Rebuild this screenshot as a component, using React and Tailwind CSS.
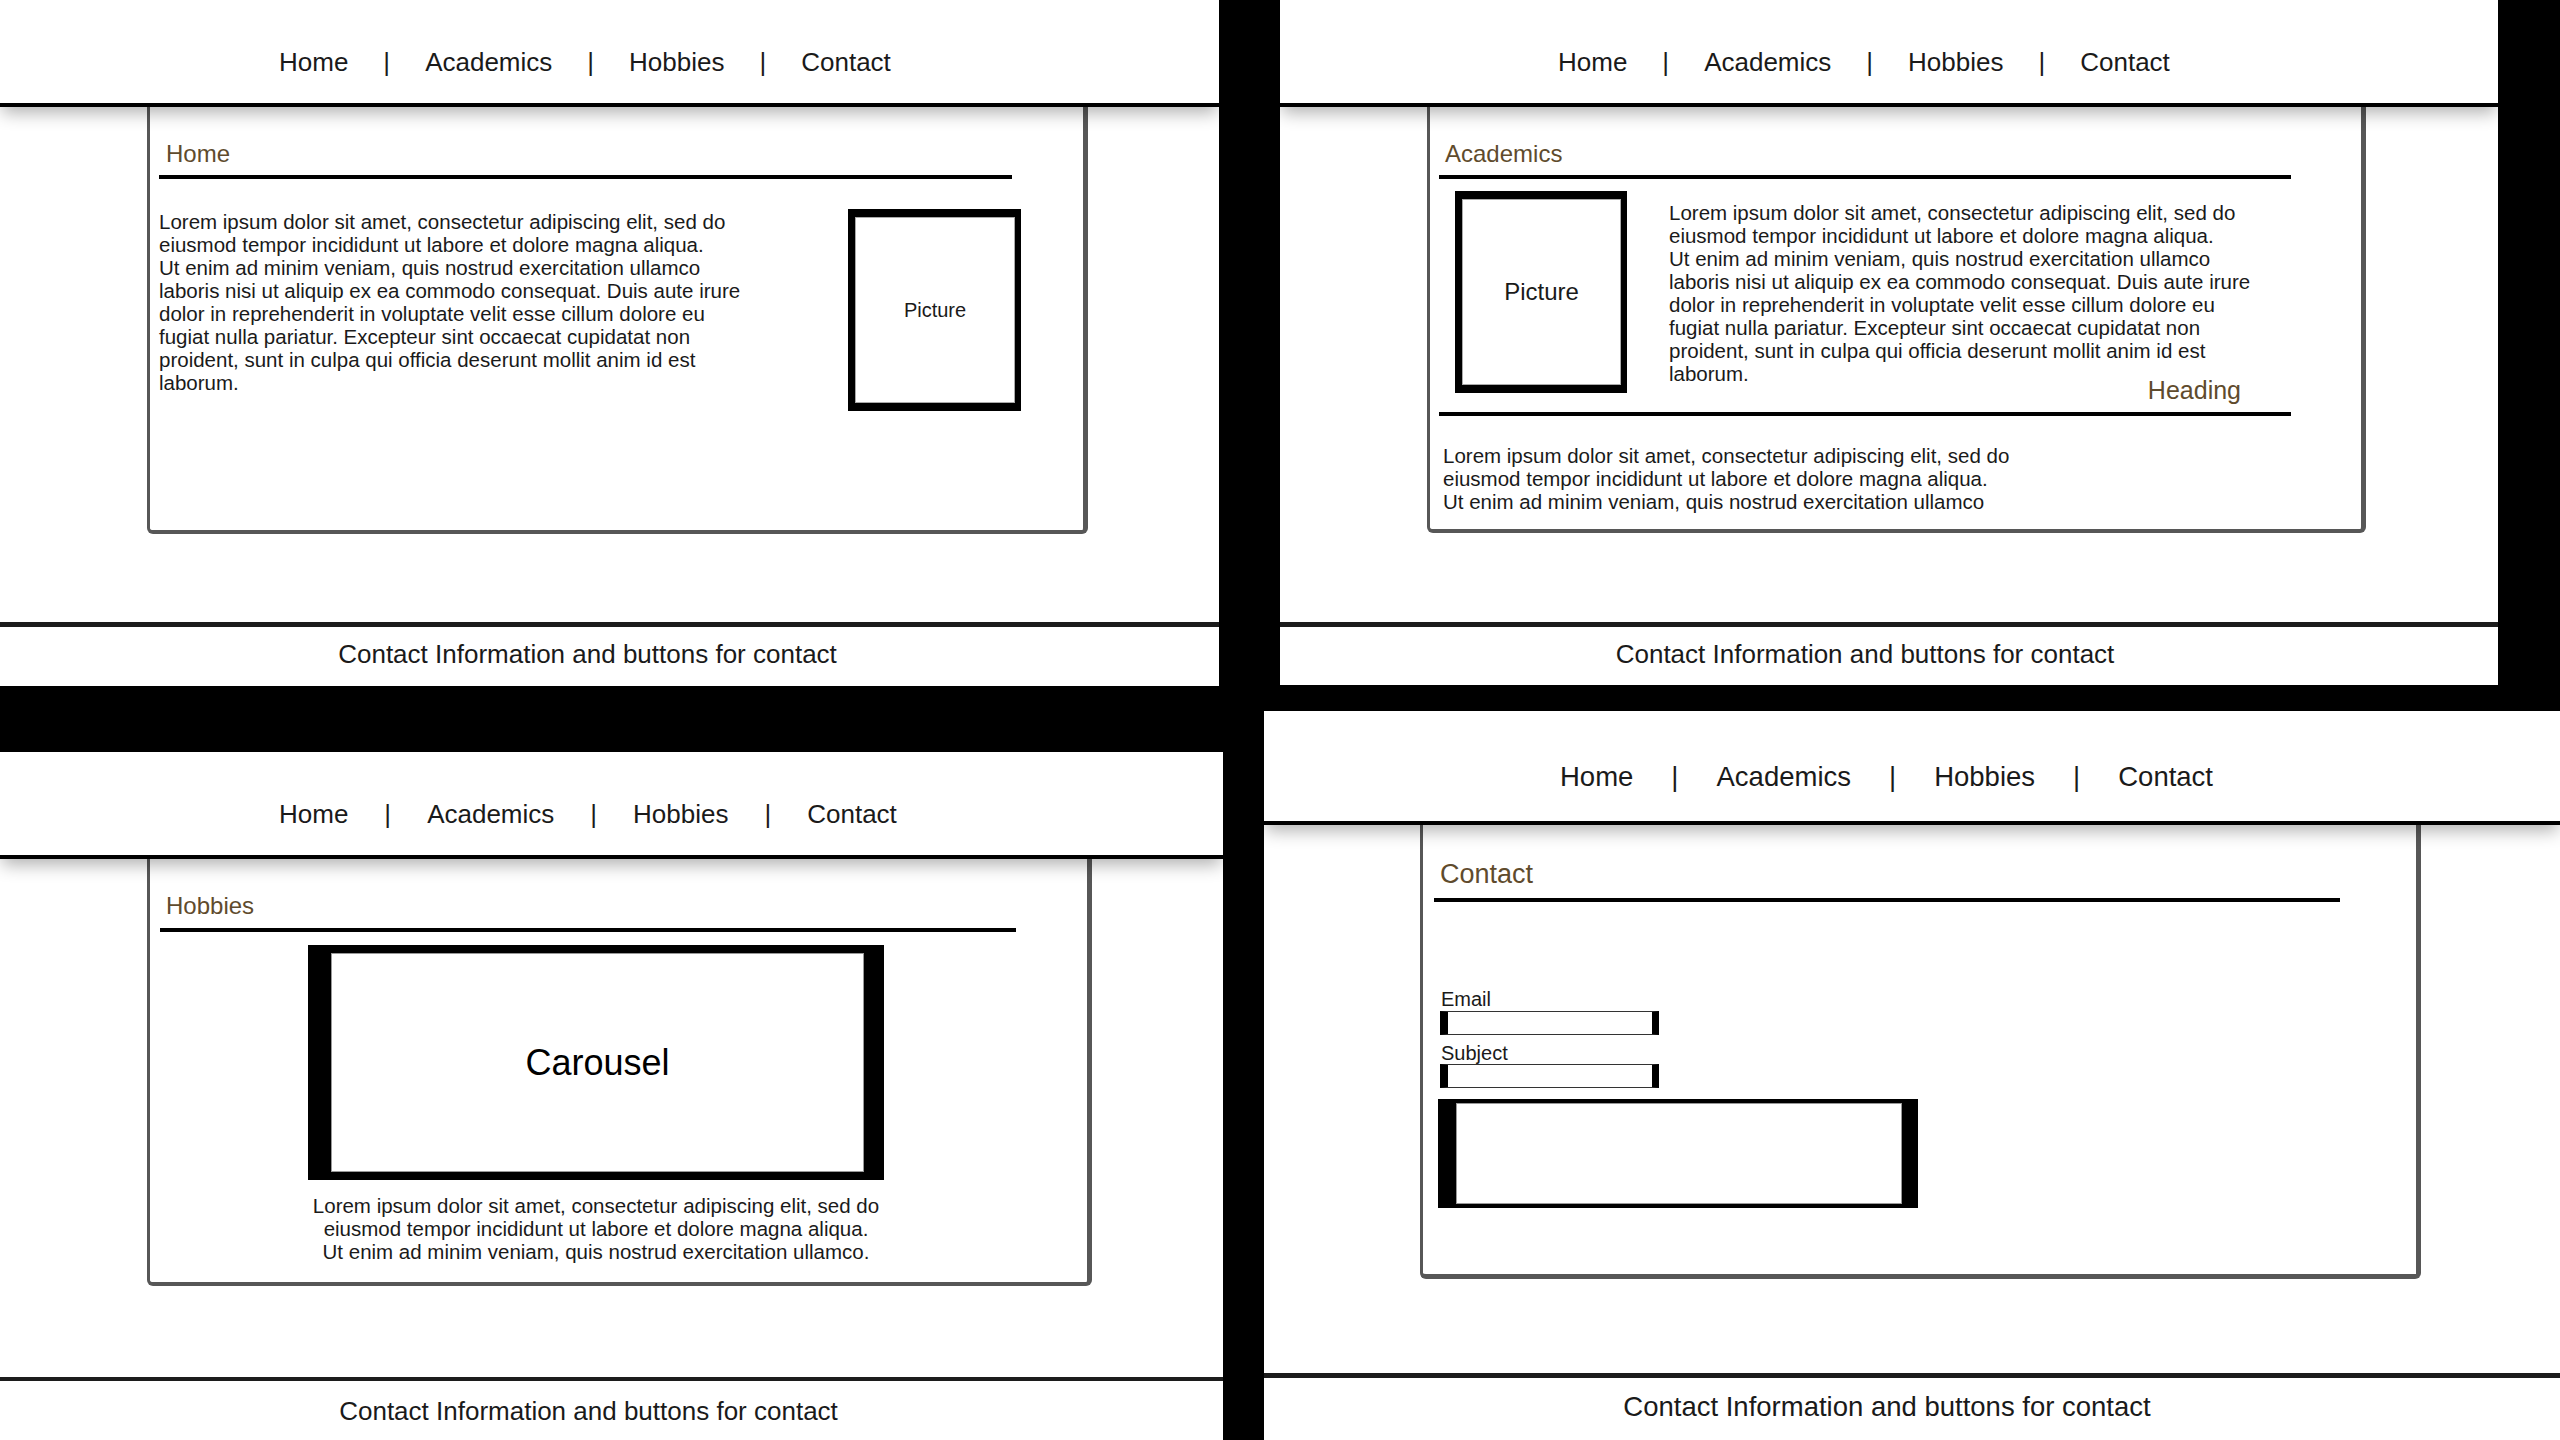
const lorem = [
  "Lorem ipsum dolor sit amet, consectetur adipiscing elit, sed do",
  "eiusmod tempor incididunt ut labore et dolore magna aliqua.",
  "Ut enim ad minim veniam, quis nostrud exercitation ullamco",
  "laboris nisi ut aliquip ex ea commodo consequat. Duis aute irure",
  "dolor in reprehenderit in voluptate velit esse cillum dolore eu",
  "fugiat nulla pariatur. Excepteur sint occaecat cupidatat non",
  "proident, sunt in culpa qui officia deserunt mollit anim id est",
  "laborum.",
];

const Lines = ({ lines }) =>
  lines.map((l, i) => (
    <div key={i} className="whitespace-nowrap">
      {l}
    </div>
  ));

const Nav = ({ className }) => {
  const items = ["Home", "Academics", "Hobbies", "Contact"];
  return (
    <nav className={"flex items-center text-[#1a1a1a] " + className}>
      {items.map((t, i) => (
        <span key={t} className="contents">
          {i > 0 && <span>|</span>}
          <span>{t}</span>
        </span>
      ))}
    </nav>
  );
};

const Header = () => (
  <header className="relative z-10 h-[107px] shrink-0 bg-white border-b-4 border-black pt-[21px] flex items-center shadow-[0_8px_16px_-2px_rgba(0,0,0,0.3)]">
    <Nav className="gap-[35px] text-[26px] leading-[30px] pl-[279px]" />
  </header>
);

// home page
const HomePanel = () => (
  <section className="bg-white flex flex-col w-[1219px] h-[686px]">
    <Header />
    <main className="flex-1">
      <div className="ml-[147px] w-[941px] h-[427px] border-l-[3px] border-r-[5px] border-b-[4px] border-t-0 border-[#575757] rounded-b-[6px] pl-[9px] text-[#1a1a1a]">
        <h2 className="pl-[7px] pt-[33px] text-[24px] leading-[28px] text-[#5f4b2d]">Home</h2>
        <div className="mt-[7px] h-[4px] w-[853px] bg-black" />
        <div className="flex mt-[31px]">
          <div className="w-[689px] text-[20.5px] leading-[23px]">
            <Lines lines={lorem} />
          </div>
          <div className="-mt-[1px] w-[173px] h-[202px] border-black border-l-[7px] border-t-[8px] border-r-[6px] border-b-[8px]">
            <div className="w-full h-full border border-[#aaa] flex items-center justify-center text-[20px]">
              Picture
            </div>
          </div>
        </div>
      </div>
    </main>
    <footer className="h-[64px] shrink-0 border-t-[5px] border-[#1c1c1c] bg-white flex items-center justify-center pr-[44px] pb-[5px] text-[26px] leading-[30px] text-[#1a1a1a]">
      Contact Information and buttons for contact
    </footer>
  </section>
);

// academics page
const AcademicsPanel = () => (
  <section className="ml-[16px] bg-white flex flex-col w-[1218px] h-[685px]">
    <header className="relative z-10 h-[107px] shrink-0 bg-white border-b-4 border-black pt-[21px] flex items-center shadow-[0_8px_16px_-2px_rgba(0,0,0,0.3)]">
      <Nav className="gap-[35px] text-[26px] leading-[30px] pl-[278px]" />
    </header>
    <main className="flex-1">
      <div className="ml-[147px] w-[939px] h-[426px] border-l-[3px] border-r-[5px] border-b-[4px] border-t-0 border-[#575757] rounded-b-[6px] pl-[9px] text-[#1a1a1a]">
        <h2 className="pl-[6px] pt-[33px] text-[24px] leading-[28px] text-[#5f4b2d]">Academics</h2>
        <div className="mt-[7px] h-[4px] w-[852px] bg-black" />
        <div className="flex mt-[12px] h-[221px]">
          <div className="ml-[16px] w-[172px] h-[202px] border-black border-l-[7px] border-t-[8px] border-r-[6px] border-b-[8px]">
            <div className="w-full h-full border border-[#aaa] flex items-center justify-center text-[24px]">
              Picture
            </div>
          </div>
          <div className="ml-[42px] w-[572px] pt-[10px] text-[20.5px] leading-[23px]">
            <Lines lines={lorem} />
            <div className="-mt-[6px] text-right text-[25px] leading-[22px] text-[#5f4b2d]">Heading</div>
          </div>
        </div>
        <div className="h-[4px] w-[852px] bg-black" />
        <div className="mt-[28px] pl-[4px] text-[20.5px] leading-[23px]">
          <Lines lines={lorem.slice(0, 3)} />
        </div>
      </div>
    </main>
    <footer className="h-[63px] shrink-0 border-t-[5px] border-[#1c1c1c] bg-white flex items-center justify-center pr-[48px] pb-[4px] text-[26px] leading-[30px] text-[#1a1a1a]">
      Contact Information and buttons for contact
    </footer>
  </section>
);

// hobbies page
const HobbiesPanel = () => (
  <section className="mt-[66px] bg-white flex flex-col w-[1223px] h-[688px]">
    <header className="relative z-10 h-[107px] shrink-0 bg-white border-b-4 border-black pt-[21px] flex items-center shadow-[0_8px_16px_-2px_rgba(0,0,0,0.3)]">
      <Nav className="gap-[36px] text-[26px] leading-[30px] pl-[279px]" />
    </header>
    <main className="flex-1">
      <div className="ml-[147px] w-[945px] h-[427px] border-l-[3px] border-r-[5px] border-b-[4px] border-t-0 border-[#575757] rounded-b-[6px] pl-[10px] text-[#1a1a1a]">
        <h2 className="pl-[6px] pt-[33px] text-[24px] leading-[28px] text-[#5f4b2d]">Hobbies</h2>
        <div className="mt-[8px] h-[4px] w-[856px] bg-black" />
        <div className="ml-[148px] mt-[13px] w-[576px]">
          <div className="h-[235px] border-black border-l-[23px] border-r-[20px] border-t-[8px] border-b-[8px]">
            <div className="w-full h-full border border-[#999] flex items-center justify-center text-[36px] text-black">
              Carousel
            </div>
          </div>
          <div className="mt-[14px] text-center text-[20.5px] leading-[23px]">
            <Lines lines={[lorem[0], lorem[1], lorem[2] + "."]} />
          </div>
        </div>
      </div>
    </main>
    <footer className="h-[63px] shrink-0 border-t-[4px] border-[#1c1c1c] bg-white flex items-center justify-center pr-[46px] text-[26px] leading-[30px] text-[#1a1a1a]">
      Contact Information and buttons for contact
    </footer>
  </section>
);

// contact page
const ContactPanel = () => (
  <section className="mt-[26px] bg-white flex flex-col w-[1296px] h-[729px]">
    <header className="relative z-10 h-[114px] shrink-0 bg-white border-b-4 border-black pt-[22px] flex items-center shadow-[0_8px_16px_-2px_rgba(0,0,0,0.3)]">
      <Nav className="gap-[38px] text-[27.5px] leading-[32px] pl-[296px]" />
    </header>
    <main className="flex-1">
      <div className="ml-[156px] w-[1001px] h-[454px] border-l-[3px] border-r-[5px] border-b-[5px] border-t-0 border-[#575757] rounded-b-[6px] pl-[11px] text-[#1a1a1a]">
        <h2 className="pl-[6px] pt-[33px] text-[27px] leading-[32px] text-[#5f4b2d]">Contact</h2>
        <div className="mt-[8px] h-[4px] w-[906px] bg-black" />
        <label className="block ml-[7px] mt-[86px] text-[20px] leading-[22px]">Email</label>
        <input
          type="text"
          className="block ml-[6px] mt-[1px] w-[219px] h-[24px] border-black border-l-[8px] border-r-[7px] border-y border-y-[#333] bg-white outline-none"
        />
        <label className="block ml-[7px] mt-[7px] text-[20px] leading-[22px]">Subject</label>
        <input
          type="text"
          className="block ml-[6px] w-[219px] h-[24px] border-black border-l-[8px] border-r-[7px] border-y border-y-[#333] bg-white outline-none"
        />
        <div className="ml-[4px] mt-[11px] w-[480px] h-[109px] border-black border-l-[18px] border-r-[16px] border-t-[4px] border-b-[4px]">
          <textarea className="block w-full h-full resize-none border border-[#999] bg-white outline-none" />
        </div>
      </div>
    </main>
    <footer className="h-[67px] shrink-0 border-t-[5px] border-[#1c1c1c] bg-white flex items-center justify-center pr-[50px] pb-[4px] text-[27.5px] leading-[32px] text-[#1a1a1a]">
      Contact Information and buttons for contact
    </footer>
  </section>
);

export default function App() {
  return (
    <div className="w-[2560px] h-[1440px] bg-black flex overflow-hidden font-['Liberation_Sans',Arial,sans-serif]">
      <div className="flex flex-col w-[1223px] shrink-0">
        <HomePanel />
        <HobbiesPanel />
      </div>
      <div className="flex flex-col ml-[41px] shrink-0">
        <AcademicsPanel />
        <ContactPanel />
      </div>
    </div>
  );
}
